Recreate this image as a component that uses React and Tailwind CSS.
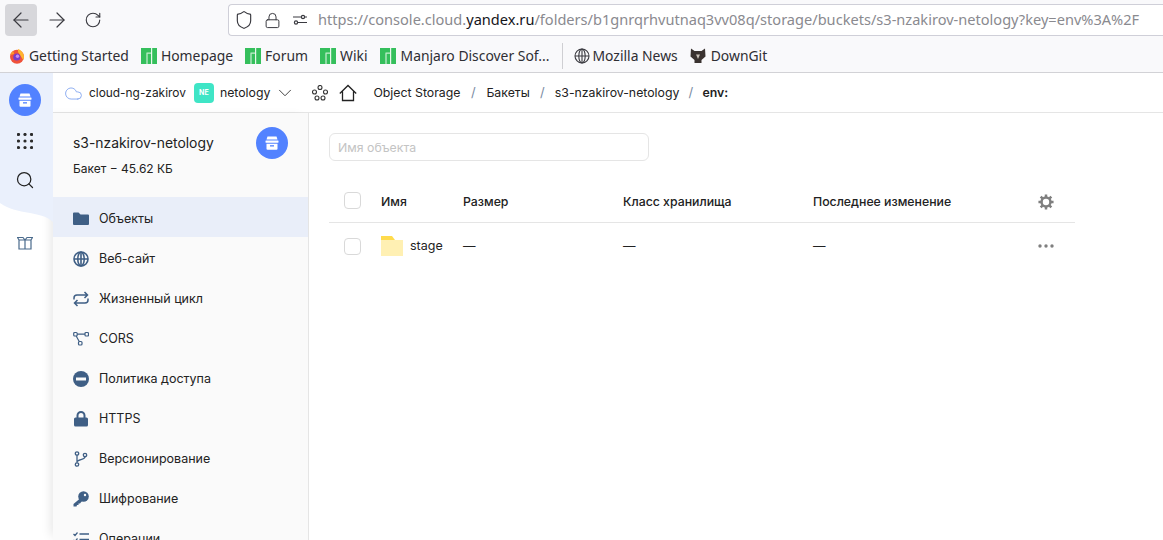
import React from "react";
import { ArrowLeft, ArrowRight, RotateCw, Shield, Lock, ChevronDown, Cloud, Search } from "lucide-react";

const Manjaro = () => (
  <svg width="16" height="16" viewBox="0 0 16 16" className="shrink-0">
    <rect width="16" height="16" fill="#35bf5c" />
    <rect x="5.5" y="5.5" width="1" height="10.5" fill="#e8f8ec" />
    <rect x="10" y="0" width="1.2" height="16" fill="#e8f8ec" />
    <rect x="5.5" y="4.6" width="5" height="1" fill="#e8f8ec" />
  </svg>
);

const Firefox = () => (
  <svg width="16" height="16" viewBox="0 0 16 16" className="shrink-0">
    <circle cx="8" cy="8.8" r="7" fill="#f0523a" />
    <path d="M9 1c3 1 6 4 6 8 0 1-.3 2-.8 3L11 7 9 4z" fill="#ffb42e" />
    <path d="M1.2 7c.5-2 1.5-3 3-4l1 3z" fill="#ff9a2e" />
    <circle cx="7.8" cy="9" r="3.6" fill="#7a3bc9" />
    <circle cx="8.5" cy="8.3" r="1.7" fill="#c78cf0" />
  </svg>
);

const Globe = ({ color = "#3f5f85", size = 16, sw = 1.3 }) => (
  <svg width={size} height={size} viewBox="0 0 16 16" fill="none" stroke={color} strokeWidth={sw} className="shrink-0">
    <circle cx="8" cy="8" r="7" />
    <ellipse cx="8" cy="8" rx="3.2" ry="7" />
    <path d="M1 8h14M8 1v14" />
  </svg>
);

const Fox = () => (
  <svg width="16" height="16" viewBox="0 0 16 16" className="shrink-0">
    <path d="M1 .5l3.500 2.500h7l3.500-2.500.5 8L11.500 12v3h-7v-3L.5 8.500z" fill="#3a3330" />
    <path d="M6 6.500h4L8 11z" fill="#c9c2b8" />
  </svg>
);

const Bookmark = ({ icon, label, className = "", gap = "gap-[4px]" }) => (
  <div className={`flex items-center ${gap} ${className}`}>
    {icon}
    <span className="text-[13.9px] text-[#2e2e33] whitespace-nowrap">{label}</span>
  </div>
);

const BucketIcon = () => (
  <div className="flex items-center justify-center rounded-full bg-[#5282ff] w-8 h-8 shrink-0">
    <svg width="16" height="16" viewBox="0 0 16 16" fill="#fff">
      <path d="M3.5 1.5h9l1 3h-11z" />
      <rect x="1.5" y="5.5" width="13" height="2.2" rx=".4" />
      <path d="M2.5 8.7h11v5a1 1 0 0 1-1 1h-9a1 1 0 0 1-1-1z" />
      <rect x="6" y="10.2" width="4" height="1.3" fill="#5282ff" />
    </svg>
  </div>
);

const c = "#3f5f85";
const Ic = ({ children }) => (
  <svg width="16" height="16" viewBox="0 0 16 16" fill="none" className="shrink-0">{children}</svg>
);

const menu = [
  ["Объекты", <Ic><path d="M0 2.500a1 1 0 0 1 1-1h4.500l2 2H15a1 1 0 0 1 1 1v8.500a1 1 0 0 1-1 1H1a1 1 0 0 1-1-1z" fill={c} /></Ic>],
  ["Веб-сайт", <Globe size={16} sw={1.6} />],
  ["Жизненный цикл", <Ic><path d="M1 8.500V7a3 3 0 0 1 3-3h10M11.500 1l3 3-3 3M15 7.500V9a3 3 0 0 1-3 3H2M4.500 15l-3-3 3-3" stroke={c} strokeWidth="1.500" /></Ic>],
  ["CORS", <Ic><rect x=".7" y="1.500" width="3.500" height="3.500" rx="1" stroke={c} strokeWidth="1.200" /><rect x="12" y="1.500" width="3.500" height="3.500" rx="1" stroke={c} strokeWidth="1.200" /><rect x="5.500" y="10.500" width="3.500" height="3.500" rx="1" stroke={c} strokeWidth="1.200" /><path d="M4.200 3.200H12M3.200 5l3 5.500" stroke={c} strokeWidth="1.200" /></Ic>],
  ["Политика доступа", <Ic><circle cx="8" cy="8" r="8" fill={c} /><rect x="3" y="6.500" width="10" height="3" fill="#fafafa" /></Ic>],
  ["HTTPS", <Ic><path d="M4.500 7V4.500a3.500 3.500 0 0 1 7 0V7" stroke={c} strokeWidth="2" /><rect x="1" y="6.500" width="14" height="9" rx="1.500" fill={c} /></Ic>],
  ["Версионирование", <Ic><circle cx="4" cy="2.500" r="1.700" stroke={c} strokeWidth="1.300" /><circle cx="4" cy="13.500" r="1.700" stroke={c} strokeWidth="1.300" /><circle cx="12" cy="4" r="1.700" stroke={c} strokeWidth="1.300" /><path d="M4 4.200v7.600M12 5.700C12 9 4.500 8 4 11" stroke={c} strokeWidth="1.300" /></Ic>],
  ["Шифрование", <Ic><circle cx="10.500" cy="5.500" r="5.300" fill={c} /><path d="M7 7.500L.5 13v2.500h3l.5-1.500h1.500v-1.500H7L9 10z" fill={c} /><circle cx="12" cy="4" r="1.200" fill="#fafafa" /></Ic>],
  ["Операции", <Ic><path d="M.5 3l1.500 1.500L4.500 1.500M.5 9l1.500 1.500L4.500 7.500M.5 14.500l1.500 1.500" stroke={c} strokeWidth="1.200" /><path d="M6.500 3H16M6.500 8.500H16M6.500 14H16" stroke={c} strokeWidth="1.700" /></Ic>],
];

const Checkbox = () => <div className="w-[17px] h-[17px] rounded-[4px] border border-[#d9d9d9] bg-white shrink-0" />;

const Sep = ({ className = "w-[25px]" }) => <span className={`${className} text-center text-[#7a8ca3] text-[13px]`}>/</span>;

const Gear = () => (
  <svg width="16" height="16" viewBox="0 0 18 18" fill="none" className="mt-[2px]">
    <circle cx="9" cy="9" r="5" stroke="#7f7f7f" strokeWidth="2.800" />
    <g stroke="#7f7f7f" strokeWidth="2.800">
      <path d="M9 .5v3M9 14.500v3M.5 9h3M14.500 9h3M3 3l2 2M13 13l2 2M15 3l-2 2M5 13l-2 2" />
    </g>
  </svg>
);

export default function App() {
  return (
    <div className="w-[1163px] h-[540px] overflow-hidden flex flex-col bg-white" style={{ fontFamily: '"Noto Sans", sans-serif' }}>
      {/* Toolbar */}
      <div className="h-[36px] bg-[#f9f9fb] flex items-start pt-[4px] shrink-0">
        <div className="ml-[5px] w-[32px] h-[32px] rounded-[4px] bg-[#d7d7db] flex items-center justify-center">
          <ArrowLeft size={24} strokeWidth={1.2} color="#3a3a40" />
        </div>
        <ArrowRight size={24} strokeWidth={1.2} color="#3a3a40" className="ml-[8px] mt-[4px]" />
        <RotateCw size={18} strokeWidth={1.5} color="#3a3a40" className="ml-[15px] mt-[7px]" />
        <div className="ml-[126px] flex-1 h-[32px] bg-white border border-[#cfcfd8] border-r-0 rounded-l-[4px] flex items-center">
          <Shield size={20} strokeWidth={1.4} color="#3a3a40" className="ml-[5px]" />
          <Lock size={17} strokeWidth={1.4} color="#3a3a40" className="ml-[10px]" />
          <svg width="16" height="16" viewBox="0 0 16 16" fill="none" stroke="#3a3a40" strokeWidth="1.200" className="ml-[11px]">
            <circle cx="11" cy="5" r="1.600" /><circle cx="4" cy="10.500" r="1.600" />
            <path d="M1 5h8M13 5h2M6 10.500h9" />
          </svg>
          <span className="ml-[10px] text-[14.58px] text-[#8a8a8f] whitespace-nowrap">
            https://console.cloud.<span className="text-[#15141a]">yandex.ru</span>/folders/b1gnrqrhvutnaq3vv08q/storage/buckets/s3-nzakirov-netology?key=env%3A%2F
          </span>
        </div>
      </div>
      {/* Bookmarks */}
      <div className="h-[37px] bg-[#f9f9fb] border-b border-[#d2d2d6] flex items-center pl-[9px] pt-[4px] shrink-0">
        <Bookmark icon={<Firefox />} label="Getting Started" />
        <Bookmark icon={<Manjaro />} label="Homepage" className="ml-[12px]" />
        <Bookmark icon={<Manjaro />} label="Forum" className="ml-[12px]" />
        <Bookmark icon={<Manjaro />} label="Wiki" className="ml-[12px]" />
        <Bookmark icon={<Manjaro />} label="Manjaro Discover Sof..." className="ml-[12px]" gap="gap-[5px]" />
        <div className="w-px h-[26px] bg-[#cfcfd3] ml-[12px]" />
        <Bookmark icon={<Globe color="#3a3a40" sw={1.100} />} label="Mozilla News" className="ml-[11px]" gap="gap-[3px]" />
        <Bookmark icon={<Fox />} label="DownGit" className="ml-[12px]" gap="gap-[5px]" />
      </div>
      {/* Page */}
      <div className="flex-1 flex min-h-0" style={{ fontFamily: 'Inter, "Noto Sans", sans-serif' }}>
        {/* Rail */}
        <div className="w-[53px] shrink-0 relative flex flex-col pt-[11px] pl-[9px]">
          <svg className="absolute left-0 top-0" width="53" height="150" viewBox="0 0 53 150" preserveAspectRatio="none">
            <path d="M0 0H53V149C46 143 40 142 30 140C18 138 8 136 0 130Z" fill="#eaf0fc" />
          </svg>
          <div className="relative flex flex-col items-center w-8">
            <BucketIcon />
            <svg width="16" height="16" viewBox="0 0 16 16" fill="#2b2b2b" className="mt-[17px]">
              {[1.500, 8, 14.500].flatMap((y) => [1.500, 8, 14.500].map((x) => <circle key={`${x}-${y}`} cx={x} cy={y} r="1.600" />))}
            </svg>
            <Search size={20} strokeWidth={1.500} color="#222" className="mt-[21px] -ml-[1px]" />
            <svg width="16" height="14" viewBox="0 0 16 14" fill="none" stroke="#4a6a8c" strokeWidth="1.200" className="mt-[46px]">
              <path d="M2 4h12v9H2zM8 4v9M2 4L.5 1.500H6L8 4l2-2.500h5.500L14 4" />
            </svg>
          </div>
        </div>
        {/* Right of rail */}
        <div className="flex-1 flex flex-col min-w-0">
          <div className="h-[40px] shrink-0 border-b border-[#e5e5e5] flex items-center pt-[1px] text-[12.300px] text-[#222] whitespace-nowrap">
            <Cloud size={19} strokeWidth={1.100} color="#7fa3ef" className="ml-[11px]" />
            <span className="ml-[6px] text-[11.900px]">cloud-ng-zakirov</span>
            <div className="ml-[8px] w-[20px] h-[20px] rounded-[4px] bg-[#3fe5c6] flex items-center justify-center text-[7px] font-bold text-white">NE</div>
            <span className="ml-[6px]">netology</span>
            <ChevronDown size={22} strokeWidth={1} color="#333" className="ml-[4px]" />
            <svg width="16" height="16" viewBox="0 0 16 16" fill="none" stroke="#333" strokeWidth="1.100" className="ml-[16px]">
              <circle cx="8" cy="2.500" r="2" /><circle cx="2.500" cy="7" r="2" /><circle cx="13.500" cy="7" r="2" /><circle cx="5" cy="13" r="2" /><circle cx="11" cy="13" r="2" />
            </svg>
            <svg width="18" height="18" viewBox="0 0 18 18" fill="none" stroke="#222" strokeWidth="1.300" className="ml-[11px]">
              <path d="M.8 9.500L9 1.500l8.200 8M3.500 7.500v9h11v-9" />
            </svg>
            <span className="ml-[16px]">Object Storage</span>
            <Sep className="w-[26px]" />
            <span>Бакеты</span>
            <Sep />
            <span>s3-nzakirov-netology</span>
            <Sep className="w-[23px]" />
            <span className="font-semibold">env:</span>
          </div>
          <div className="flex-1 flex min-h-0">
            {/* Sidebar */}
            <div className="w-[256px] shrink-0 bg-[#fafafa] border-r border-[#e5e5e5] shadow-[-6px_0_10px_-4px_rgba(0,0,0,0.1)] overflow-hidden">
              <div className="h-[84px] pl-[20px] pr-[20px] pt-[14px] flex justify-between">
                <div className="pt-[6px]">
                  <div className="text-[13.900px] leading-[20px] text-[#222]">s3-nzakirov-netology</div>
                  <div className="text-[12px] leading-[16px] mt-[8px] text-[#222]">Бакет − 45.62 КБ</div>
                </div>
                <BucketIcon />
              </div>
              {menu.map(([label, icon], i) => (
                <div key={label} className={`h-[40px] flex items-center pl-[20px] pt-[4px] gap-[10px] ${i === 0 ? "bg-[#e9eef9]" : ""}`}>
                  {icon}
                  <span className="text-[12.500px] text-[#222] whitespace-nowrap">{label}</span>
                </div>
              ))}
            </div>
            {/* Content */}
            <div className="flex-1 pl-[20px] pt-[20px] pr-[88px] min-w-0">
              <div className="w-[320px] h-[28px] rounded-[6px] border border-[#e5e5e5] flex items-center pl-[8px] pt-[2px] text-[12.300px] text-[#c4c4c4]">Имя объекта</div>
              <div className="mt-[18px] h-[44px] border-b border-[#e5e5e5] flex items-center text-[12.300px] font-medium text-[#222]">
                <div className="w-[52px] pl-[15px] -mt-[1px]"><Checkbox /></div>
                <div className="w-[82px] pt-[3px]">Имя</div>
                <div className="w-[160px] pt-[3px]">Размер</div>
                <div className="w-[190px] pt-[3px]">Класс хранилища</div>
                <div className="w-[225px] pt-[3px]">Последнее изменение</div>
                <Gear />
              </div>
              <div className="h-[46px] flex items-center text-[12.500px] text-[#222]">
                <div className="w-[52px] pl-[15px]"><Checkbox /></div>
                <div className="w-[82px] flex items-center gap-[7px]">
                  <svg width="22" height="20" viewBox="0 0 22 20">
                    <path d="M0 0h11l3 4H0z" fill="#ffdb4d" />
                    <rect y="4" width="22" height="16" fill="#fff0b3" />
                  </svg>
                  <span>stage</span>
                </div>
                <div className="w-[160px]">—</div>
                <div className="w-[190px]">—</div>
                <div className="w-[225px]">—</div>
                <svg width="16" height="4" viewBox="0 0 16 4" fill="#7f7f7f">
                  <circle cx="2" cy="2" r="1.700" /><circle cx="8" cy="2" r="1.700" /><circle cx="14" cy="2" r="1.700" />
                </svg>
              </div>
            </div>
          </div>
        </div>
      </div>
    </div>
  );
}
